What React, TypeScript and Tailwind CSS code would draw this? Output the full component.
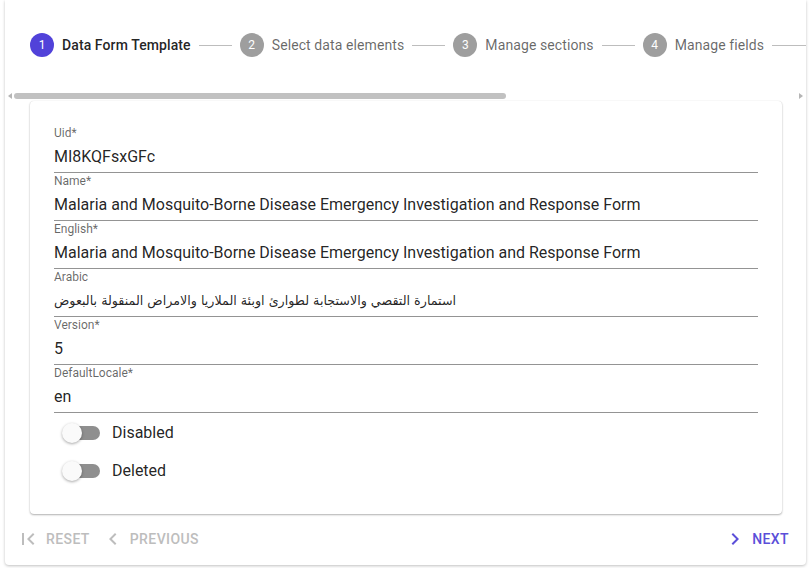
import React from "react";

const steps = ["Data Form Template", "Select data elements", "Manage sections", "Manage fields"];

const fields = [
    { label: "Uid*", value: "MI8KQFsxGFc" },
    { label: "Name*", value: "Malaria and Mosquito-Borne Disease Emergency Investigation and Response Form" },
    { label: "English*", value: "Malaria and Mosquito-Borne Disease Emergency Investigation and Response Form" },
    { label: "Arabic", value: "استمارة التقصي والاستجابة لطوارئ اوبئة الملاريا والامراض المنقولة بالبعوض", arabic: true },
    { label: "Version*", value: "5" },
    { label: "DefaultLocale*", value: "en" },
];

function Field({ label, value, arabic }: { label: string; value: string; arabic?: boolean }) {
    return (
        <div className="flex flex-col">
            <div className="h-[14px] text-[12px] leading-[16px] text-[rgba(0,0,0,0.6)]">{label}</div>
            <div className="h-[34px] pt-[6px] border-b border-[rgba(0,0,0,0.42)]">
                {arabic ? (
                    <div className="text-[12.7px] leading-[24px] text-[rgba(0,0,0,0.87)] font-['DejaVu_Sans',sans-serif] whitespace-nowrap">{value}</div>
                ) : (
                    <div className="text-[16px] leading-[24px] text-[rgba(0,0,0,0.87)] whitespace-nowrap">{value}</div>
                )}
            </div>
        </div>
    );
}

function Toggle({ label }: { label: string }) {
    return (
        <div className="flex items-center h-[38px]">
            <div className="flex items-center w-[38px] h-[20px]">
                <div className="w-[20px] h-[20px] rounded-full bg-[#fafafa] shadow-[0_1px_3px_rgba(0,0,0,0.35)] z-10"></div>
                <div className="w-[36px] h-[14px] rounded-full bg-[#8f8f8f] ml-[-18px]"></div>
            </div>
            <div className="ml-[12px] text-[16px] text-[rgba(0,0,0,0.87)]">{label}</div>
        </div>
    );
}

function App() {
    return (
        <div className="pl-[5px] pr-[6px] pb-[3px] bg-white font-['Roboto',sans-serif]">
            <div className="bg-white rounded-b-[4px] shadow-[0_1px_3px_rgba(0,0,0,0.25)] overflow-hidden">
                <div className="overflow-hidden pl-[17px] pt-[33px]">
                    <div className="flex items-center h-[24px]">
                        {steps.map((s, i) => (
                            <React.Fragment key={s}>
                                {i > 0 && <div className="w-[33px] h-px bg-[#bdbdbd]"></div>}
                                <div className="flex items-center px-2 shrink-0">
                                    <div className={"w-6 h-6 rounded-full flex items-center justify-center text-white text-[12px] " + (i === 0 ? "bg-[#5142d9]" : "bg-[#9e9e9e]")}>
                                        {i + 1}
                                    </div>
                                    <div className={"ml-2 text-[14px] tracking-[0.1px] " + (i === 0 ? "font-medium text-[rgba(0,0,0,0.87)]" : "text-[rgba(0,0,0,0.6)]")}>
                                        {s}
                                    </div>
                                </div>
                            </React.Fragment>
                        ))}
                        <div className="flex-1 h-px bg-[#bdbdbd]"></div>
                    </div>
                </div>

                <div className="flex items-center h-[8px] mt-[35px] px-[2px]">
                    <div className="w-0 h-0 border-y-[3px] border-y-transparent border-r-[4px] border-r-[#b5b5b5] ml-[1px]"></div>
                    <div className="flex-1 ml-[2px] mr-[3px] h-[6px]">
                        <div className="w-[492px] h-[6px] rounded-full bg-[#c1c1c1]"></div>
                    </div>
                    <div className="w-0 h-0 border-y-[3px] border-y-transparent border-l-[4px] border-l-[#b5b5b5] mr-[1px]"></div>
                </div>

                <div className="ml-[25px] mr-[24px] mt-[1px] rounded-[4px] bg-white shadow-[0_1px_2px_rgba(0,0,0,0.3),0_0_1px_rgba(0,0,0,0.12)] px-6 pt-6 pb-6">
                    {fields.map((f) => (
                        <Field key={f.label} label={f.label} value={f.value} arabic={f.arabic} />
                    ))}
                    <div className="flex flex-col pl-[8px] mt-px">
                        <Toggle label="Disabled" />
                        <Toggle label="Deleted" />
                    </div>
                </div>

                <div className="flex items-center justify-between h-[36px] mt-[7px] mb-[8px] pl-[6px] pr-[17px]">
                    <div className="flex items-center">
                        <div className="flex items-center px-[5px]">
                            <svg width="24" height="24" viewBox="0 0 24 24" fill="#bdbdbd">
                                <path d="M18.41 16.59L13.82 12l4.59-4.59L17 6l-6 6 6 6zM6 6h2v12H6z" />
                            </svg>
                            <span className="ml-[6px] text-[14px] font-medium tracking-[0.4px] text-[#bdbdbd]">RESET</span>
                        </div>
                        <div className="flex items-center ml-[6px]">
                            <svg width="24" height="24" viewBox="0 0 24 24" fill="#bdbdbd">
                                <path d="M15.41 7.41L14 6l-6 6 6 6 1.41-1.41L10.83 12z" />
                            </svg>
                            <span className="ml-[5px] text-[14px] font-medium tracking-[0.4px] text-[#bdbdbd]">PREVIOUS</span>
                        </div>
                    </div>
                    <div className="flex items-center">
                        <svg width="24" height="24" viewBox="0 0 24 24" fill="#5b4fd9">
                            <path d="M10 6L8.59 7.41 13.17 12l-4.58 4.59L10 18l6-6z" />
                        </svg>
                        <span className="ml-[5px] text-[14px] font-medium tracking-[0.4px] text-[#5b4fd9]">NEXT</span>
                    </div>
                </div>
            </div>
        </div>
    );
}

export default App;
